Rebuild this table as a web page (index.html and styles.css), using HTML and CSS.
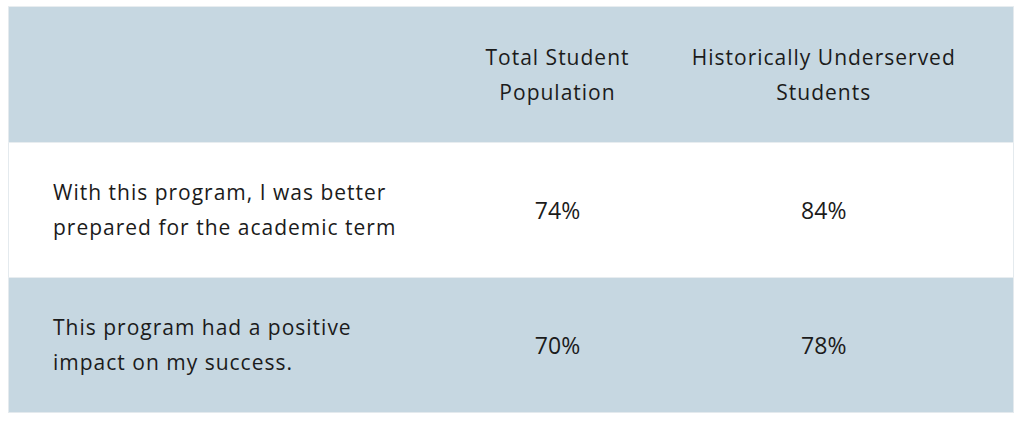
FILE: index.html
```html
<!DOCTYPE html>
<html lang="en">
<head>
<meta charset="utf-8">
<link rel="stylesheet" href="styles.css">
</head>
<body>
<table class="survey">
  <colgroup>
    <col class="c-label">
    <col class="c-total">
    <col class="c-under">
  </colgroup>
  <thead>
    <tr class="row head shaded">
      <th class="label"></th>
      <th class="val">Total Student<br>Population</th>
      <th class="val last">Historically Underserved<br>Students</th>
    </tr>
  </thead>
  <tbody>
    <tr class="row">
      <td class="label">With this program, I was better<br>prepared for the academic term</td>
      <td class="val num">74%</td>
      <td class="val num last">84%</td>
    </tr>
    <tr class="row shaded">
      <td class="label">This program had a positive<br>impact on my success.</td>
      <td class="val num">70%</td>
      <td class="val num last">78%</td>
    </tr>
  </tbody>
</table>
</body>
</html>
```

FILE: styles.css
```css
html, body {
  background: #ffffff;
}
body {
  margin: 6px 8px;
  font-family: "Open Sans", "Liberation Sans", sans-serif;
  color: #1b1b1b;
}
.survey {
  width: 1005px;
  border-collapse: collapse;
  table-layout: fixed;
  border: 1px solid #e4eaee;
}
.c-label { width: 462px; }
.c-total { width: 174px; }
.c-under { width: 369px; }
.row {
  height: 135px;
}
.row.head {
  height: 136px;
}
.row th, .row td {
  border-top: 1px solid #e8edf0;
  vertical-align: middle;
  font-weight: 400;
  font-size: 21px;
  line-height: 35px;
  letter-spacing: 1px;
  padding: 0;
}
.shaded {
  background: #c6d7e1;
}
.label {
  text-align: left;
  padding: 0 0 0 44px !important;
}
.val {
  text-align: center;
  padding: 0 10px !important;
}
.val.last {
  padding: 0 20px 0 10px !important;
}
.num {
  font-size: 23px !important;
  letter-spacing: 0 !important;
}
```
